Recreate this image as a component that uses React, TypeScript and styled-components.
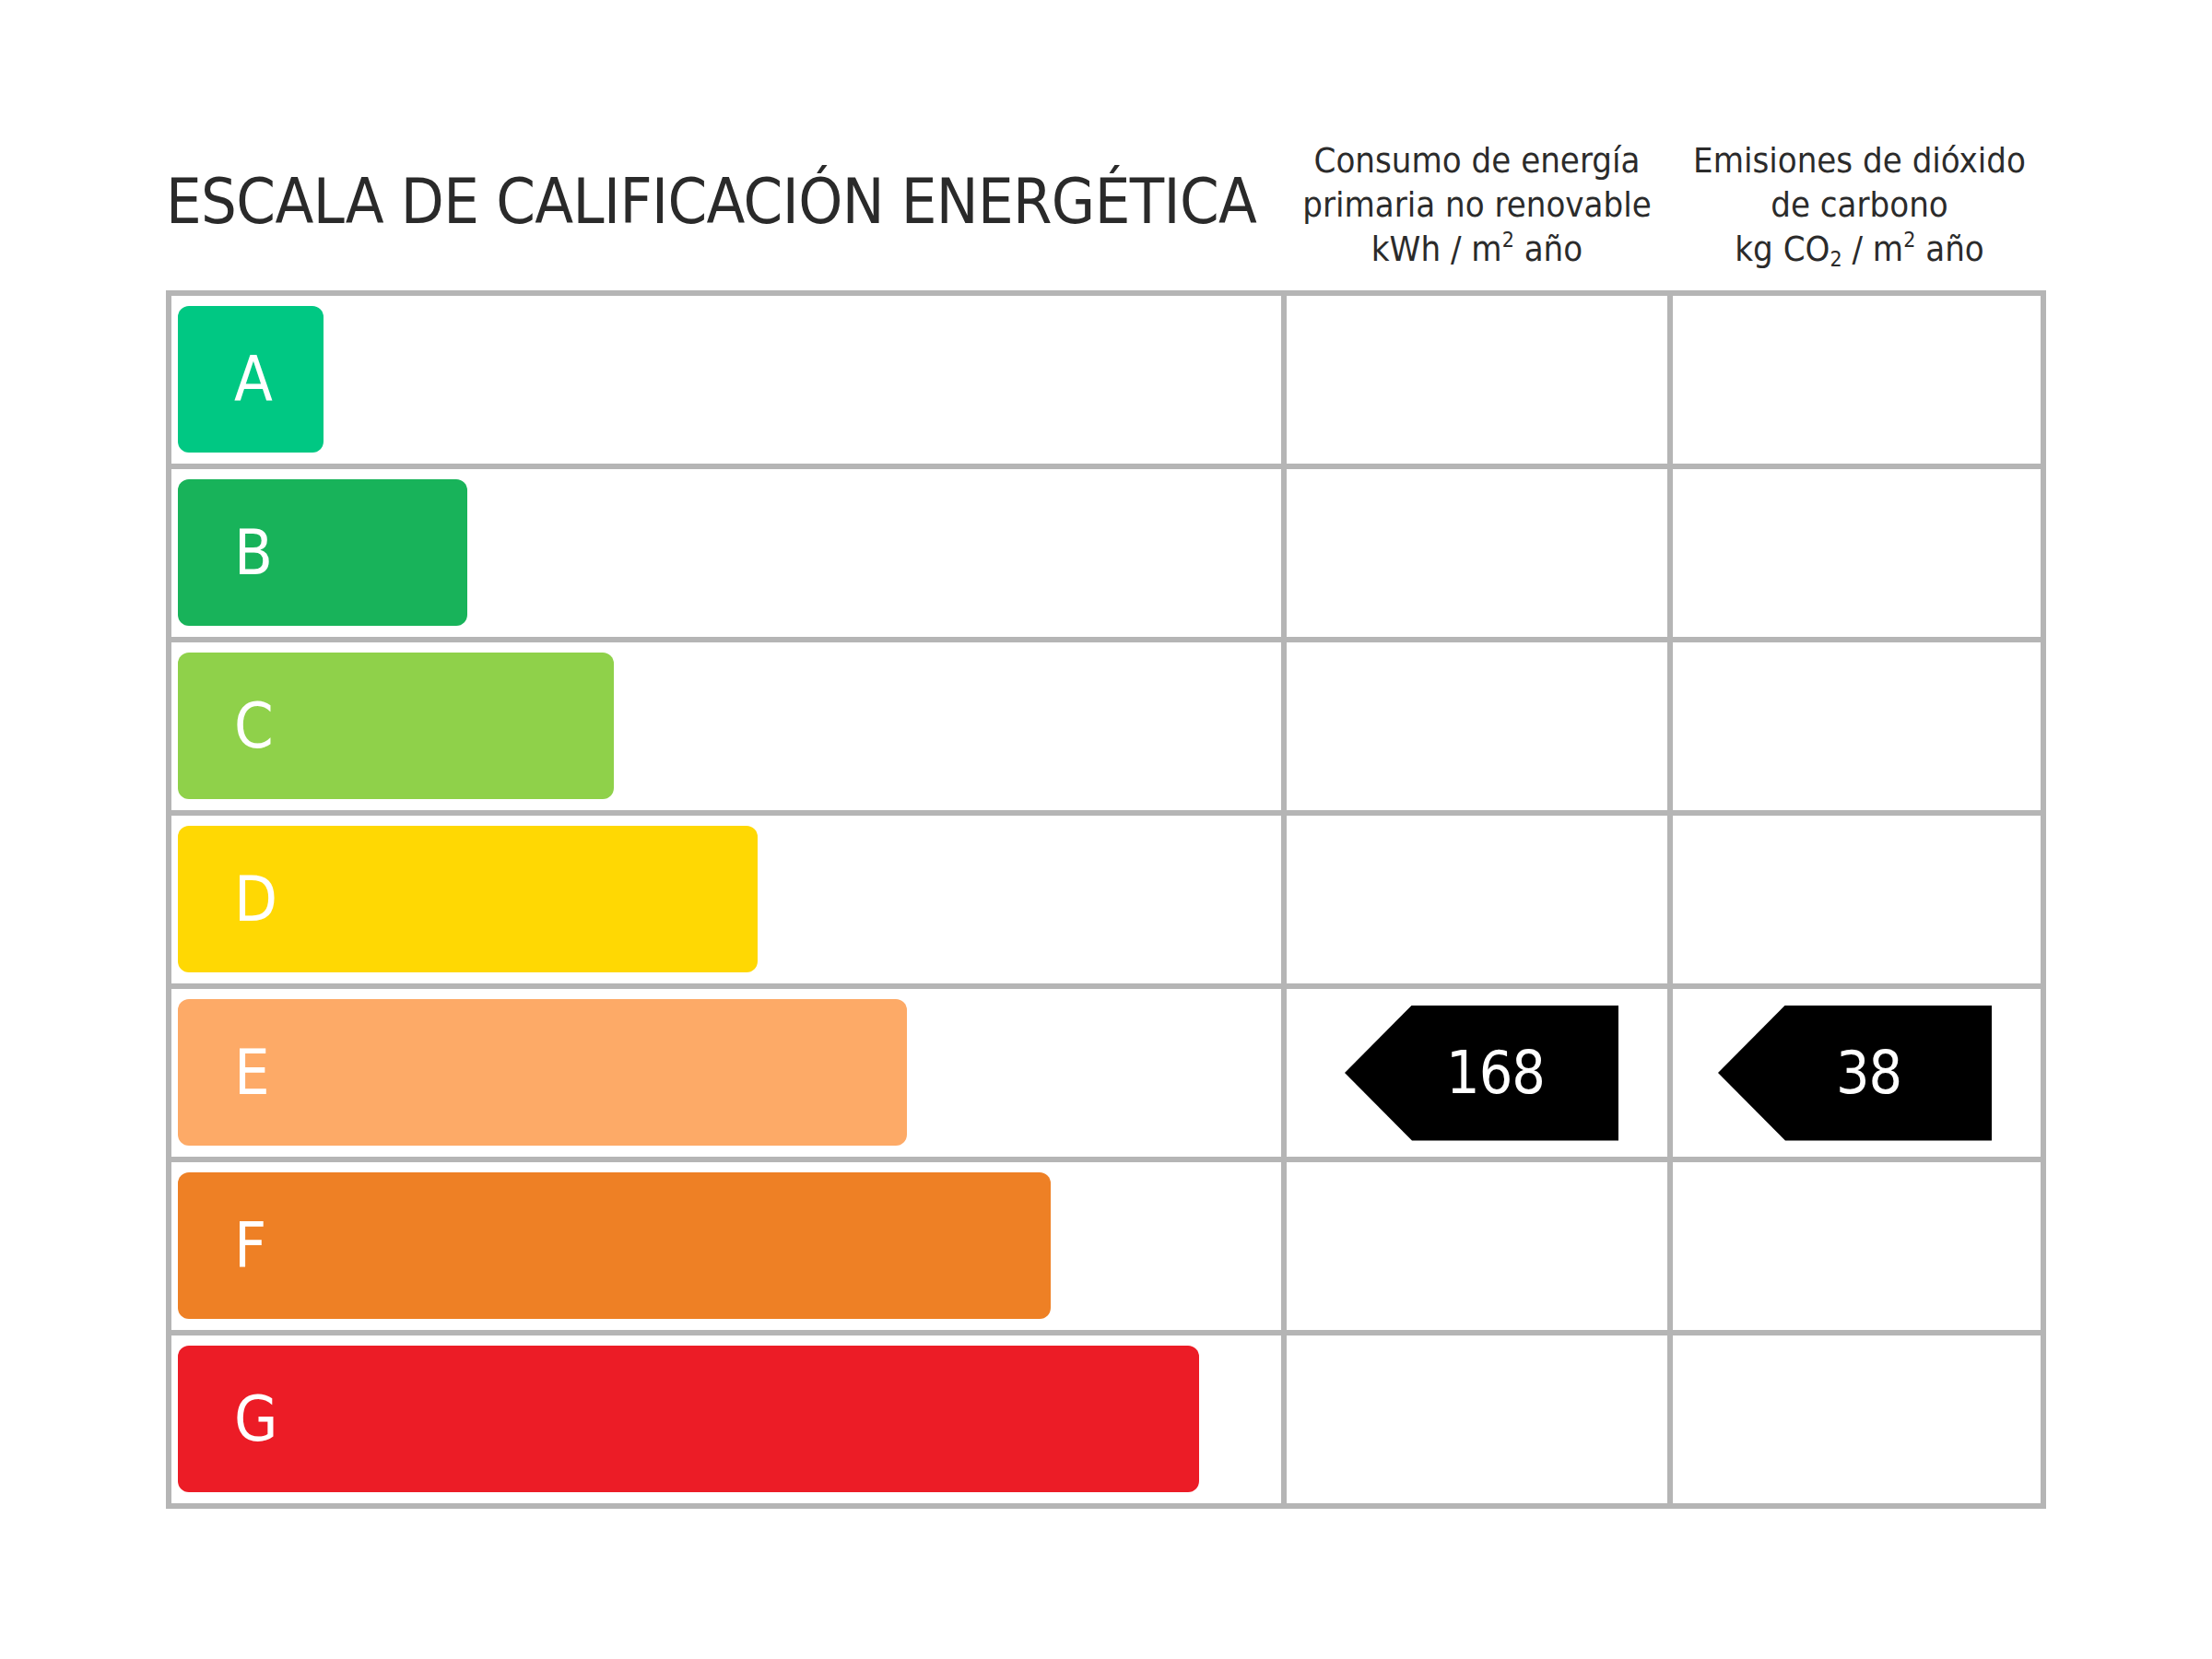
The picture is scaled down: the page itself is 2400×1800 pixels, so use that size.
import React from "react";
import styled, { createGlobalStyle } from "styled-components";

const GlobalStyle = createGlobalStyle`
  html, body {
    margin: 0;
    padding: 0;
    background: #ffffff;
  }
  body {
    font-family: "Liberation Sans Narrow", "DejaVu Sans Condensed", "Liberation Sans", sans-serif;
    color: #2a2a2a;
  }
`;

const LINE = "#b5b5b5";

const Page = styled.div`
  width: 2040px;
  margin: 0 auto;
  padding-top: 150px;
`;

const Header = styled.div`
  display: grid;
  grid-template-columns: 1210px 419px 411px;
  align-items: center;
  margin-bottom: 21px;
`;

const Title = styled.h1`
  margin: -6px 0 0;
  font-size: 68px;
  font-weight: 400;
  line-height: 1;
  letter-spacing: -0.6px;
  white-space: nowrap;
  color: #2a2a2a;
`;

const ColumnTitle = styled.div`
  font-size: 38px;
  line-height: 48px;
  text-align: center;
  white-space: nowrap;
  color: #2b2b2b;
  padding-left: 6px;

  sup,
  sub {
    font-size: 23px;
    line-height: 0;
  }
  sup {
    vertical-align: 15px;
  }
  sub {
    vertical-align: -6px;
  }
`;

const Table = styled.div`
  border: 6px solid ${LINE};
  display: flex;
  flex-direction: column;
`;

const Row = styled.div`
  display: grid;
  grid-template-columns: 1204px 419px 405px;
  height: 182px;
  & + & {
    border-top: 6px solid ${LINE};
  }
`;

const ScaleCell = styled.div`
  display: flex;
  align-items: center;
  padding: 0 0 1px 7px;
`;

const ValueCell = styled.div`
  border-left: 6px solid ${LINE};
  display: flex;
  align-items: center;
  justify-content: flex-end;
  padding-right: 53px;
`;

const Badge = styled.div<{ $color: string; $width: number }>`
  width: ${(p) => p.$width}px;
  height: 159px;
  background: ${(p) => p.$color};
  border-radius: 12px;
  display: flex;
  align-items: center;
  padding-left: 61px;
  box-sizing: border-box;
  color: #ffffff;
  font-size: 68px;
  line-height: 1;
`;

const Pointer = styled.div`
  width: 297px;
  height: 147px;
  background: #000000;
  clip-path: polygon(73px 0, 100% 0, 100% 100%, 73px 100%, 0 50%);
  display: flex;
  align-items: center;
  justify-content: center;
  padding-left: 30px;
  box-sizing: border-box;
  color: #ffffff;
  font-size: 64px;
  line-height: 1;
  letter-spacing: -1px;
`;

const ratings = [
  { letter: "A", color: "#00c883", width: 158 },
  { letter: "B", color: "#18b35a", width: 314 },
  { letter: "C", color: "#8fd14a", width: 473 },
  { letter: "D", color: "#ffd803", width: 629 },
  { letter: "E", color: "#fdaa67", width: 791 },
  { letter: "F", color: "#ee8025", width: 947 },
  { letter: "G", color: "#ec1c26", width: 1108 },
];

const current = { letter: "E", energy: 168, emissions: 38 };

const App = () => {
  return (
    <Page>
      <GlobalStyle />
      <Header>
        <Title>ESCALA DE CALIFICACIÓN ENERGÉTICA</Title>
        <ColumnTitle>
          Consumo de energía
          <br />
          primaria no renovable
          <br />
          kWh / m<sup>2</sup> año
        </ColumnTitle>
        <ColumnTitle>
          Emisiones de dióxido
          <br />
          de carbono
          <br />
          kg CO<sub>2</sub> / m<sup>2</sup> año
        </ColumnTitle>
      </Header>
      <Table>
        {ratings.map((r) => (
          <Row key={r.letter}>
            <ScaleCell>
              <Badge $color={r.color} $width={r.width}>
                {r.letter}
              </Badge>
            </ScaleCell>
            <ValueCell>
              {r.letter === current.letter && <Pointer>{current.energy}</Pointer>}
            </ValueCell>
            <ValueCell>
              {r.letter === current.letter && (
                <Pointer>{current.emissions}</Pointer>
              )}
            </ValueCell>
          </Row>
        ))}
      </Table>
    </Page>
  );
};

export default App;
